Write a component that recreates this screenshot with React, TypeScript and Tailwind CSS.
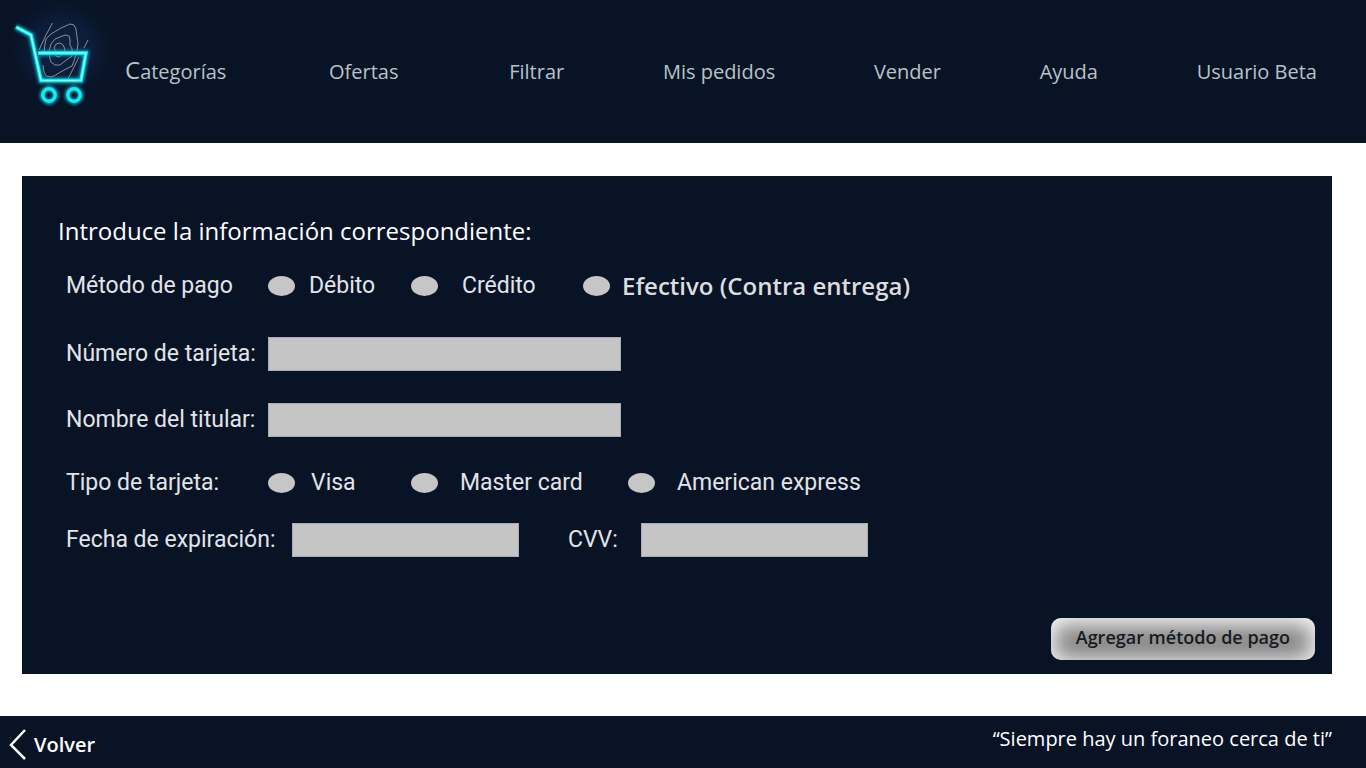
import type { ReactNode } from "react";

const navLinks = [
  { label: "Categorías", className: "mr-1 first-letter:text-2xl first-letter:leading-6" },
  { label: "Ofertas", className: "mr-3" },
  { label: "Filtrar", className: "" },
  { label: "Mis pedidos", className: "" },
  { label: "Vender", className: "" },
  { label: "Ayuda", className: "" },
  { label: "Usuario Beta", className: "" },
];

function CartLogo() {
  return (
    <svg viewBox="0 0 120 120" className="size-[120px] shrink-0" role="img" aria-label="Inicio">
      <defs>
        <radialGradient id="halo">
          <stop offset="0" stopColor="#10294f" stopOpacity="0.8" />
          <stop offset="0.55" stopColor="#0d2143" stopOpacity="0.65" />
          <stop offset="1" stopColor="#081326" stopOpacity="0" />
        </radialGradient>
        <filter id="glow" x="-30%" y="-30%" width="160%" height="160%">
          <feGaussianBlur stdDeviation="1.4" />
        </filter>
      </defs>
      <ellipse cx="62" cy="50" rx="58" ry="56" fill="url(#halo)" />
      <g fill="none" stroke="#a59690" strokeWidth="0.9" strokeLinejoin="round">
        <path d="M52.5 23 46 35 39 50" />
        <path d="M44 52 45 44 46 39 51 34 61 28 70 24 74 25 76 29 77 37 78 43 77 51 74 61 72 66 64 70 54 76 50 77 46 76 44 72 43 65" />
        <path d="M50 59 49 51 51 44 55 39 65 35 69 36 70 40 70 45 72 49 72 56 65 61 60 65 55 65 51 62Z" />
        <path d="M56 51 54 48 56 44 60 43 63 45 65 49 63 54 59 57 56 56Z" />
        <path d="M88 40 84 48M79 57 68 79" />
      </g>
      <g fill="none" stroke="#00a9bd" strokeWidth="5.5" filter="url(#glow)">
        <path d="M16 27 31 35 41 80.500H81L86 53H39" />
        <circle cx="49" cy="95" r="6.5" />
        <circle cx="74" cy="95" r="6.5" />
      </g>
      <g fill="none" stroke="#10eef5" strokeWidth="3.4">
        <path d="M16 27 31 35 41 80.500H81L86 53H38" />
        <circle cx="49" cy="95" r="6.2" />
        <circle cx="74" cy="95" r="6.2" />
      </g>
      <path d="M17 27.5 31 35 41 80.500H81L86 53H39" fill="none" stroke="#a5ffff" strokeWidth="1.2" />
    </svg>
  );
}

function Option({ name, label, className }: { name: string; label: ReactNode; className: string }) {
  return (
    <label className={`flex items-center whitespace-nowrap ${className}`}>
      <input
        type="radio"
        name={name}
        className="h-5 w-[27px] shrink-0 appearance-none rounded-[50%] bg-[#c6c6c6] checked:bg-[#00e5f0]"
      />
      {label}
    </label>
  );
}

const fieldClass = "h-[34px] border border-[#a9adb3] bg-[#c5c5c5] px-2 text-[#081326]";

export default function App() {
  return (
    <div className="flex min-h-screen flex-col bg-white font-['Open_Sans',sans-serif] text-white">
      <header className="flex h-[143px] bg-[#081326] pr-[49px]">
        <a href="#inicio" className="shrink-0">
          <CartLogo />
        </a>
        <nav className="flex flex-1 items-center justify-between pl-[5px] text-xl text-[#b7c4c7]">
          {navLinks.map((link) => (
            <a key={link.label} href="#" className={`block leading-8 whitespace-nowrap ${link.className}`}>
              {link.label}
            </a>
          ))}
        </nav>
      </header>

      <main className="flex flex-1 flex-col pt-[33px] pr-[34px] pb-[42px] pl-[22px]">
        <form className="flex flex-1 flex-col bg-[#081326] pt-[35px] pr-[17px] pb-[14px] pl-9">
          <h1 className="text-2xl leading-10">Introduce la información correspondiente:</h1>

          <div className="pl-2 font-['Roboto',sans-serif] text-[23px] leading-8 text-[#e2e4e8]">
            <div role="radiogroup" aria-labelledby="metodo" className="mt-[17px] flex h-9 items-center">
              <span id="metodo" className="w-[202px]">
                Método de pago
              </span>
              <Option name="metodo" label="Débito" className="w-[143px] gap-[14px]" />
              <Option name="metodo" label="Crédito" className="w-[172px] gap-6" />
              <Option
                name="metodo"
                className="gap-3"
                label={<span className="font-['Open_Sans',sans-serif] text-2xl font-semibold text-[#dcdddf]">Efectivo (Contra entrega)</span>}
              />
            </div>

            <div className="mt-[33px] flex items-center">
              <label htmlFor="numero" className="w-[202px] whitespace-nowrap">
                Número de tarjeta:
              </label>
              <input id="numero" type="text" className={`${fieldClass} w-[353px]`} />
            </div>

            <div className="mt-8 flex items-center">
              <label htmlFor="titular" className="w-[202px] whitespace-nowrap">
                Nombre del titular:
              </label>
              <input id="titular" type="text" className={`${fieldClass} w-[353px]`} />
            </div>

            <div role="radiogroup" aria-labelledby="tipo" className="mt-7 flex h-9 items-center">
              <span id="tipo" className="w-[202px]">
                Tipo de tarjeta:
              </span>
              <Option name="tipo" label="Visa" className="w-[143px] gap-4" />
              <Option name="tipo" label="Master card" className="w-[217px] gap-[22px]" />
              <Option name="tipo" label="American express" className="gap-[22px]" />
            </div>

            <div className="mt-[22px] flex items-center">
              <label htmlFor="expiracion" className="w-[226px] whitespace-nowrap">
                Fecha de expiración:
              </label>
              <input id="expiracion" type="text" className={`${fieldClass} w-[227px]`} />
              <label htmlFor="cvv" className="ml-[49px] w-[73px]">
                CVV:
              </label>
              <input id="cvv" type="text" className={`${fieldClass} w-[227px]`} />
            </div>
          </div>

          <button
            type="button"
            className="mt-auto h-[42px] self-end rounded-[10px] bg-[#858585] px-[25px] pb-1 text-lg font-semibold text-[#161a22] shadow-[inset_0_3px_22px_3px_#ffffff]"
          >
            Agregar método de pago
          </button>
        </form>
      </main>

      <footer className="flex h-[52px] justify-between bg-[#081326] pr-[34px] pl-2">
        <a href="#volver" className="flex items-center gap-1.5 pt-[5px] text-xl font-semibold">
          <svg viewBox="0 0 20 34" className="h-[34px] w-5" fill="none" stroke="currentColor" strokeWidth="2.5" aria-hidden="true">
            <path d="M17 2 3 17 17 31" />
          </svg>
          Volver
        </a>
        <p className="pt-[9px] text-xl">“Siempre hay un foraneo cerca de ti”</p>
      </footer>
    </div>
  );
}
